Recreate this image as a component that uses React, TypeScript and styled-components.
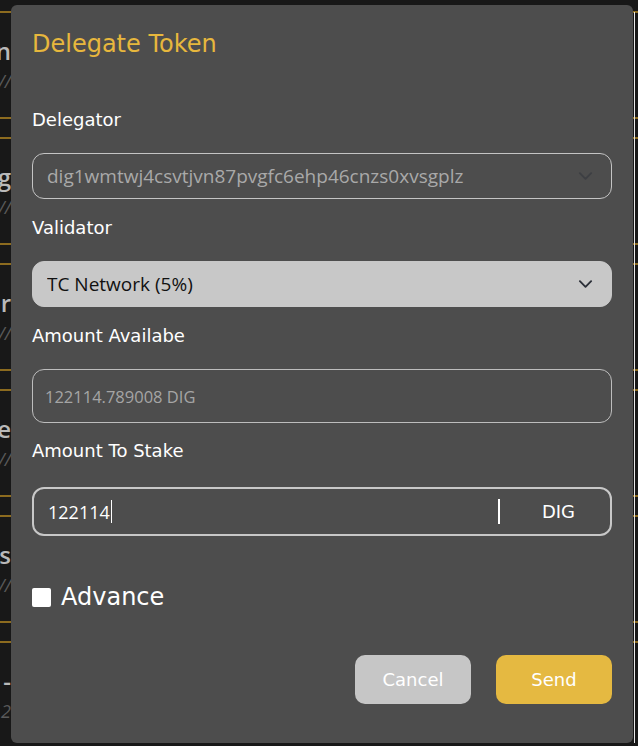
import React from "react";
import styled, { createGlobalStyle } from "styled-components";

const GlobalStyle = createGlobalStyle`
    html, body {
        margin: 0;
        padding: 0;
        background: #181818;
    }
    body {
        width: 638px;
        height: 746px;
        overflow: hidden;
        font-family: "DejaVu Sans", sans-serif;
    }
`;

const Page = styled.div`
    position: relative;
    width: 638px;
    height: 746px;
    background: #181818;
    overflow: hidden;
`;

// the list that sits behind the dialog
const Backdrop = styled.div`
    display: flex;
    flex-direction: column;
    gap: 18px;
    padding-top: 11px;
`;

const BackCard = styled.div`
    height: 108px;
    border-top: 2px solid #8c6b1f;
    border-bottom: 2px solid #8c6b1f;
    box-sizing: border-box;
    padding-top: 24px;
`;

const Peek = styled.div`
    width: 11px;
    overflow: hidden;
    display: flex;
    flex-direction: column;
    align-items: flex-end;
    white-space: nowrap;
`;

const BackTitle = styled.div`
    font-family: "Open Sans", sans-serif;
    font-size: 24px;
    line-height: 28px;
    font-weight: 600;
    color: #b9b9b9;
`;

const BackSub = styled.div`
    font-family: "Open Sans", sans-serif;
    font-size: 18px;
    line-height: 24px;
    font-style: italic;
    color: #5a5a5a;
    margin-top: 4px;
`;

const ScrollEdge = styled.div`
    position: absolute;
    left: 634px;
    top: 12px;
    bottom: 3px;
    width: 1px;
    background: #e8e8e8;
`;

const Modal = styled.div`
    position: absolute;
    top: 5px;
    left: 11px;
    width: 622px;
    bottom: 3px;
    box-sizing: border-box;
    background: #4d4d4d;
    border-radius: 6px;
    padding: 25px 21px 0;
    display: flex;
    flex-direction: column;
`;

const Title = styled.h2`
    margin: 0 0 50px;
    font-size: 24px;
    line-height: 29px;
    font-weight: 400;
    color: #e7b73d;
`;

const Label = styled.div<{ $gap?: number }>`
    font-size: 18px;
    line-height: 22px;
    color: #ffffff;
    margin-bottom: ${(p) => p.$gap ?? 22}px;
`;

const Field = styled.div<{ $gap: number }>`
    margin-bottom: ${(p) => p.$gap}px;
`;

const SelectBox = styled.div<{ $filled?: boolean }>`
    height: 46px;
    box-sizing: border-box;
    border-radius: 12px;
    border: 1px solid ${(p) => (p.$filled ? "#c8c8c8" : "#c4c4c4")};
    background: ${(p) => (p.$filled ? "#c8c8c8" : "transparent")};
    display: flex;
    align-items: center;
    padding: 0 18px 0 14px;
    font-family: "Open Sans", sans-serif;
    font-size: 19px;
    color: ${(p) => (p.$filled ? "#111111" : "#a9a9a9")};
`;

const SelectText = styled.span`
    flex: 1;
    white-space: nowrap;
    overflow: hidden;
`;

const Chevron = styled.svg<{ $dim?: boolean }>`
    width: 15px;
    height: 10px;
    opacity: ${(p) => (p.$dim ? 0.45 : 1)};
`;

const ReadOnlyBox = styled.div`
    height: 54px;
    box-sizing: border-box;
    border-radius: 12px;
    border: 1px solid #bdbdbd;
    display: flex;
    align-items: center;
    padding: 0 12px;
    font-family: "Open Sans", sans-serif;
    font-size: 16.5px;
    color: #a5a5a5;
`;

const StakeBox = styled.div`
    height: 49px;
    box-sizing: border-box;
    border-radius: 12px;
    border: 2px solid #c8c8c8;
    display: flex;
    align-items: center;
    padding-left: 14px;
`;

const StakeInput = styled.div`
    flex: 1;
    display: flex;
    align-items: center;
    font-family: "Open Sans", sans-serif;
    font-size: 18px;
    color: #ffffff;
`;

const Caret = styled.span`
    width: 1px;
    height: 23px;
    background: #ffffff;
    margin-left: 1px;
`;

const Divider = styled.span`
    width: 2px;
    height: 25px;
    background: #ffffff;
`;

const Unit = styled.span`
    width: 110px;
    box-sizing: border-box;
    padding-left: 7px;
    text-align: center;
    font-size: 18px;
    color: #ffffff;
`;

const CheckRow = styled.label`
    display: flex;
    align-items: center;
    gap: 10px;
    margin-top: 47px;
    font-size: 24px;
    line-height: 28px;
    color: #ffffff;
`;

const CheckBox = styled.span`
    width: 19px;
    height: 19px;
    border-radius: 2px;
    background: #ffffff;
`;

const Footer = styled.div`
    display: flex;
    justify-content: flex-end;
    gap: 25px;
    margin-top: 44px;
`;

const Button = styled.button<{ $primary?: boolean }>`
    width: 116px;
    height: 49px;
    border: none;
    border-radius: 10px;
    background: ${(p) => (p.$primary ? "#e5b941" : "#c6c6c6")};
    color: #ffffff;
    font-family: "DejaVu Sans", sans-serif;
    font-size: 18px;
    cursor: pointer;
`;

const backItems = [
    { title: "Delegation", sub: "//" },
    { title: "Staking vg", sub: "//" },
    { title: "Validator", sub: "//" },
    { title: "Bundle", sub: "//" },
    { title: "Rewards", sub: "//" },
    { title: "Total -", sub: "2" },
];

const ChevronIcon = ({ dim, color }: { dim?: boolean; color: string }) => (
    <Chevron $dim={dim} viewBox="0 0 16 10">
        <path d="M2 2l6 6 6-6" fill="none" stroke={color} strokeWidth="2" strokeLinecap="round" strokeLinejoin="round" />
    </Chevron>
);

const App: React.FC = () => {
    return (
        <Page>
            <GlobalStyle />
            <Backdrop>
                {backItems.map((item) => (
                    <BackCard key={item.title}>
                        <Peek>
                            <BackTitle>{item.title}</BackTitle>
                            <BackSub>{item.sub}</BackSub>
                        </Peek>
                    </BackCard>
                ))}
            </Backdrop>
            <ScrollEdge />
            <Modal>
                <Title>Delegate Token</Title>
                <Field $gap={18}>
                    <Label>Delegator</Label>
                    <SelectBox>
                        <SelectText>dig1wmtwj4csvtjvn87pvgfc6ehp46cnzs0xvsgplz</SelectText>
                        <ChevronIcon dim color="#2b2f38" />
                    </SelectBox>
                </Field>
                <Field $gap={18}>
                    <Label>Validator</Label>
                    <SelectBox $filled>
                        <SelectText>TC Network (5%)</SelectText>
                        <ChevronIcon color="#2b2f38" />
                    </SelectBox>
                </Field>
                <Field $gap={17}>
                    <Label>Amount Availabe</Label>
                    <ReadOnlyBox>122114.789008 DIG</ReadOnlyBox>
                </Field>
                <Field $gap={0}>
                    <Label $gap={25}>Amount To Stake</Label>
                    <StakeBox>
                        <StakeInput>
                            122114
                            <Caret />
                        </StakeInput>
                        <Divider />
                        <Unit>DIG</Unit>
                    </StakeBox>
                </Field>
                <CheckRow>
                    <CheckBox />
                    Advance
                </CheckRow>
                <Footer>
                    <Button>Cancel</Button>
                    <Button $primary>Send</Button>
                </Footer>
            </Modal>
        </Page>
    );
};

export default App;
